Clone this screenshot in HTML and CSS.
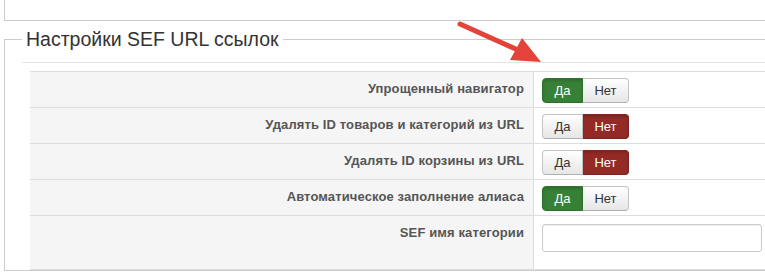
FILE: index.html
```html
<!DOCTYPE html>
<html lang="ru">
<head>
    <meta charset="UTF-8">
    <meta name="viewport" content="width=device-width, initial-scale=1.0">
    <title>Настройки SEF URL ссылок</title>
    <link rel="stylesheet" href="styles.css">
</head>
<body>

    <!-- Bottom of the previous settings block -->
    <div class="prev-box"></div>

    <!-- SEF settings -->
    <fieldset class="sef">
        <legend>Настройки SEF URL ссылок</legend>
        <div class="legend-rule"></div>

        <table class="params">
            <tr>
                <td class="key">Упрощенный навигатор</td>
                <td class="value">
                    <div class="yesno">
                        <span class="btn yes active">Да</span>
                        <span class="btn no">Нет</span>
                    </div>
                </td>
            </tr>
            <tr>
                <td class="key">Удалять ID товаров и категорий из URL</td>
                <td class="value">
                    <div class="yesno">
                        <span class="btn yes">Да</span>
                        <span class="btn no active">Нет</span>
                    </div>
                </td>
            </tr>
            <tr>
                <td class="key">Удалять ID корзины из URL</td>
                <td class="value">
                    <div class="yesno">
                        <span class="btn yes">Да</span>
                        <span class="btn no active">Нет</span>
                    </div>
                </td>
            </tr>
            <tr>
                <td class="key">Автоматическое заполнение алиаса</td>
                <td class="value">
                    <div class="yesno">
                        <span class="btn yes active">Да</span>
                        <span class="btn no">Нет</span>
                    </div>
                </td>
            </tr>
            <tr class="tall">
                <td class="key">SEF имя категории</td>
                <td class="value input-cell">
                    <input type="text" class="text-input">
                </td>
            </tr>
        </table>
    </fieldset>

    <!-- Red pointer arrow -->
    <svg class="arrow" width="765" height="278" viewBox="0 0 765 278">
        <line x1="460" y1="24" x2="520" y2="51" stroke="#e4433a" stroke-width="5" stroke-linecap="round"/>
        <polygon points="522,38 541,62 510,60" fill="#e4433a"/>
    </svg>

</body>
</html>
```

FILE: styles.css
```css
/* General styles */
* {
    box-sizing: border-box;
}

body {
    margin: 0;
    font-family: "Liberation Sans", Arial, sans-serif;
    background: #ffffff;
    color: #333333;
    overflow: hidden;
    position: relative;
}

/* Previous block */
.prev-box {
    margin-left: 4px;
    height: 21px;
    border-left: 1px solid #cccccc;
    border-bottom: 1px solid #cccccc;
}

/* Fieldset */
.sef {
    margin: 3px 0 0 4px;
    padding: 8px 0 0 17px;
    min-width: 0;
    border: 1px solid #cccccc;
    border-right: none;
}

.sef legend {
    padding: 0 4px;
    font-size: 19.5px;
    line-height: 30px;
    color: #333333;
}

.legend-rule {
    border-top: 1px solid #e5e5e5;
    margin-bottom: 8px;
}

/* Params table */
.params {
    margin-left: 8px;
    width: calc(100% - 8px);
    border-collapse: separate;
    border-spacing: 0;
}

.params td {
    border-top: 1px solid #dddddd;
    height: 36px;
    vertical-align: top;
}

.params tr.tall td {
    height: 55px;
    border-bottom: 1px solid #dddddd;
}

.params .key {
    width: 504px;
    padding: 8px 9px 0 0;
    background: #f5f5f5;
    border-right: 1px solid #dddddd;
    text-align: right;
    font-size: 13px;
    line-height: 18px;
    font-weight: bold;
    letter-spacing: 0.12px;
    color: #555555;
}

.params .value {
    padding: 6px 0 0 8px;
}

.params .input-cell {
    padding-top: 8px;
}

/* Yes / No buttons */
.yesno {
    display: flex;
}

.btn {
    display: flex;
    align-items: center;
    justify-content: center;
    height: 25px;
    font-size: 13px;
    color: #333333;
    background: linear-gradient(#ffffff, #e6e6e6);
    border: 1px solid #c4c4c4;
    border-bottom-color: #b0b0b0;
}

.btn.yes {
    width: 41px;
    border-radius: 4px 0 0 4px;
}

.btn.no {
    width: 46px;
    border-left: none;
    border-radius: 0 4px 4px 0;
}

.btn.yes.active {
    background: #378137;
    border-color: #2f6f2f;
    color: #ffffff;
    box-shadow: inset 0 2px 3px rgba(0, 0, 0, 0.15);
}

.btn.no.active {
    background: #942a25;
    border-color: #7f2420;
    color: #ffffff;
    box-shadow: inset 0 2px 3px rgba(0, 0, 0, 0.15);
}

/* Text field */
.text-input {
    display: block;
    width: 220px;
    height: 28px;
    margin: 0;
    border: 1px solid #cccccc;
    border-radius: 3px;
    background: #ffffff;
    box-shadow: inset 0 1px 1px rgba(0, 0, 0, 0.075);
}

/* Arrow overlay */
.arrow {
    position: absolute;
    top: 0;
    left: 0;
    pointer-events: none;
}
```
